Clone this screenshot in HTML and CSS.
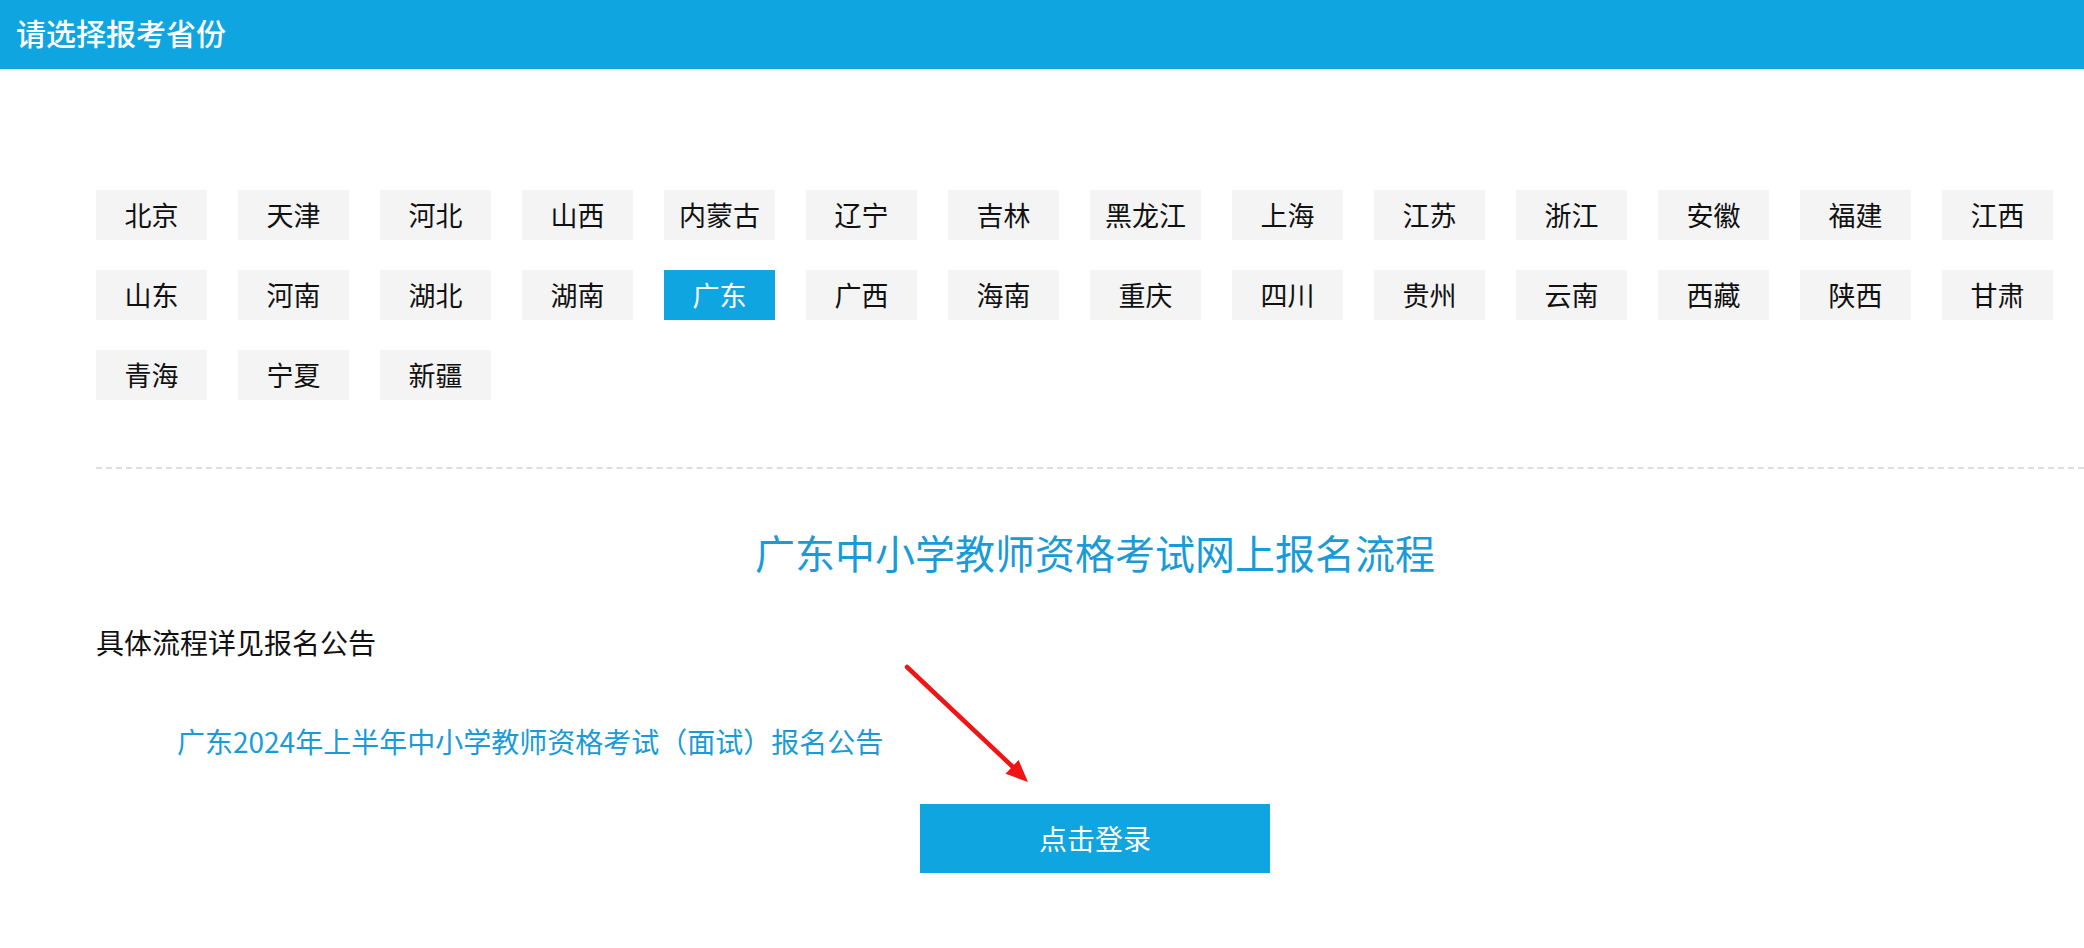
FILE: index.html
```html
<!DOCTYPE html>
<html lang="zh-CN">
<head>
    <meta charset="UTF-8">
    <meta name="viewport" content="width=device-width, initial-scale=1.0">
    <title>请选择报考省份</title>
    <link rel="stylesheet" href="styles.css">
</head>
<body>
    <div class="top-bar">请选择报考省份</div>

    <div class="main">
        <ul class="province-list">
            <li>北京</li>
            <li>天津</li>
            <li>河北</li>
            <li>山西</li>
            <li>内蒙古</li>
            <li>辽宁</li>
            <li>吉林</li>
            <li>黑龙江</li>
            <li>上海</li>
            <li>江苏</li>
            <li>浙江</li>
            <li>安徽</li>
            <li>福建</li>
            <li>江西</li>
            <li>山东</li>
            <li>河南</li>
            <li>湖北</li>
            <li>湖南</li>
            <li class="active">广东</li>
            <li>广西</li>
            <li>海南</li>
            <li>重庆</li>
            <li>四川</li>
            <li>贵州</li>
            <li>云南</li>
            <li>西藏</li>
            <li>陕西</li>
            <li>甘肃</li>
            <li>青海</li>
            <li>宁夏</li>
            <li>新疆</li>
        </ul>

        <div class="divider"></div>

        <h2 class="flow-title">广东中小学教师资格考试网上报名流程</h2>
        <p class="flow-tip">具体流程详见报名公告</p>
        <a class="notice-link" href="#">广东2024年上半年中小学教师资格考试（面试）报名公告</a>
        <div class="login-row">
            <a class="login-btn" href="#">点击登录</a>
        </div>
    </div>

    <!-- red arrow pointing at the login button -->
    <svg class="arrow-mark" width="140" height="130" viewBox="0 0 140 130">
        <line x1="7" y1="7" x2="114" y2="108" stroke="#f01414" stroke-width="4.5" stroke-linecap="round"/>
        <polygon points="128,122 105.5,113.8 118.6,100" fill="#f01414"/>
    </svg>
</body>
</html>
```

FILE: styles.css
```css
html, body {
    overflow: hidden;
}

body {
    margin: 0;
    padding: 0;
    background-color: #fff;
    font-family: "Noto Sans CJK SC", "Noto Sans", "Liberation Sans", sans-serif;
    color: #111;
    position: relative;
    height: 100vh;
}

.top-bar {
    height: 66px;
    line-height: 64px;
    padding-left: 16px;
    background-color: #0ea5e0;
    border-bottom: 3px solid #19a1db;
    color: #fff;
    font-size: 30px;
    font-weight: 500;
}

.main {
    margin-left: 96px;
    width: 1998px;
}

.province-list {
    list-style: none;
    margin: 121px 0 0;
    padding: 0;
    display: grid;
    grid-template-columns: repeat(14, 111px);
    column-gap: 31px;
    row-gap: 30px;
}

.province-list li {
    height: 50px;
    line-height: 50px;
    text-align: center;
    background-color: #f4f4f4;
    font-size: 27px;
    color: #111;
    cursor: pointer;
}

.province-list li.active {
    background-color: #0ea5e0;
    color: #fff;
}

.divider {
    margin-top: 67px;
    border-top: 2px dashed #dedede;
}

.flow-title {
    margin: 55px 0 0;
    height: 56px;
    line-height: 56px;
    text-align: center;
    font-size: 40px;
    font-weight: 400;
    color: #1a9bd7;
}

.flow-tip {
    margin: 42px 0 0;
    line-height: 40px;
    font-size: 28px;
    color: #111;
}

.notice-link {
    display: block;
    margin-top: 59px;
    padding-left: 81px;
    line-height: 40px;
    font-size: 28px;
    color: #1a9bd7;
    text-decoration: none;
}

.login-row {
    margin-top: 43px;
    display: flex;
    justify-content: center;
}

.login-btn {
    display: block;
    width: 350px;
    height: 69px;
    line-height: 69px;
    text-align: center;
    background-color: #0ea5e0;
    color: #fff;
    font-size: 28px;
    text-decoration: none;
}

.arrow-mark {
    position: absolute;
    left: 900px;
    top: 660px;
}
```
